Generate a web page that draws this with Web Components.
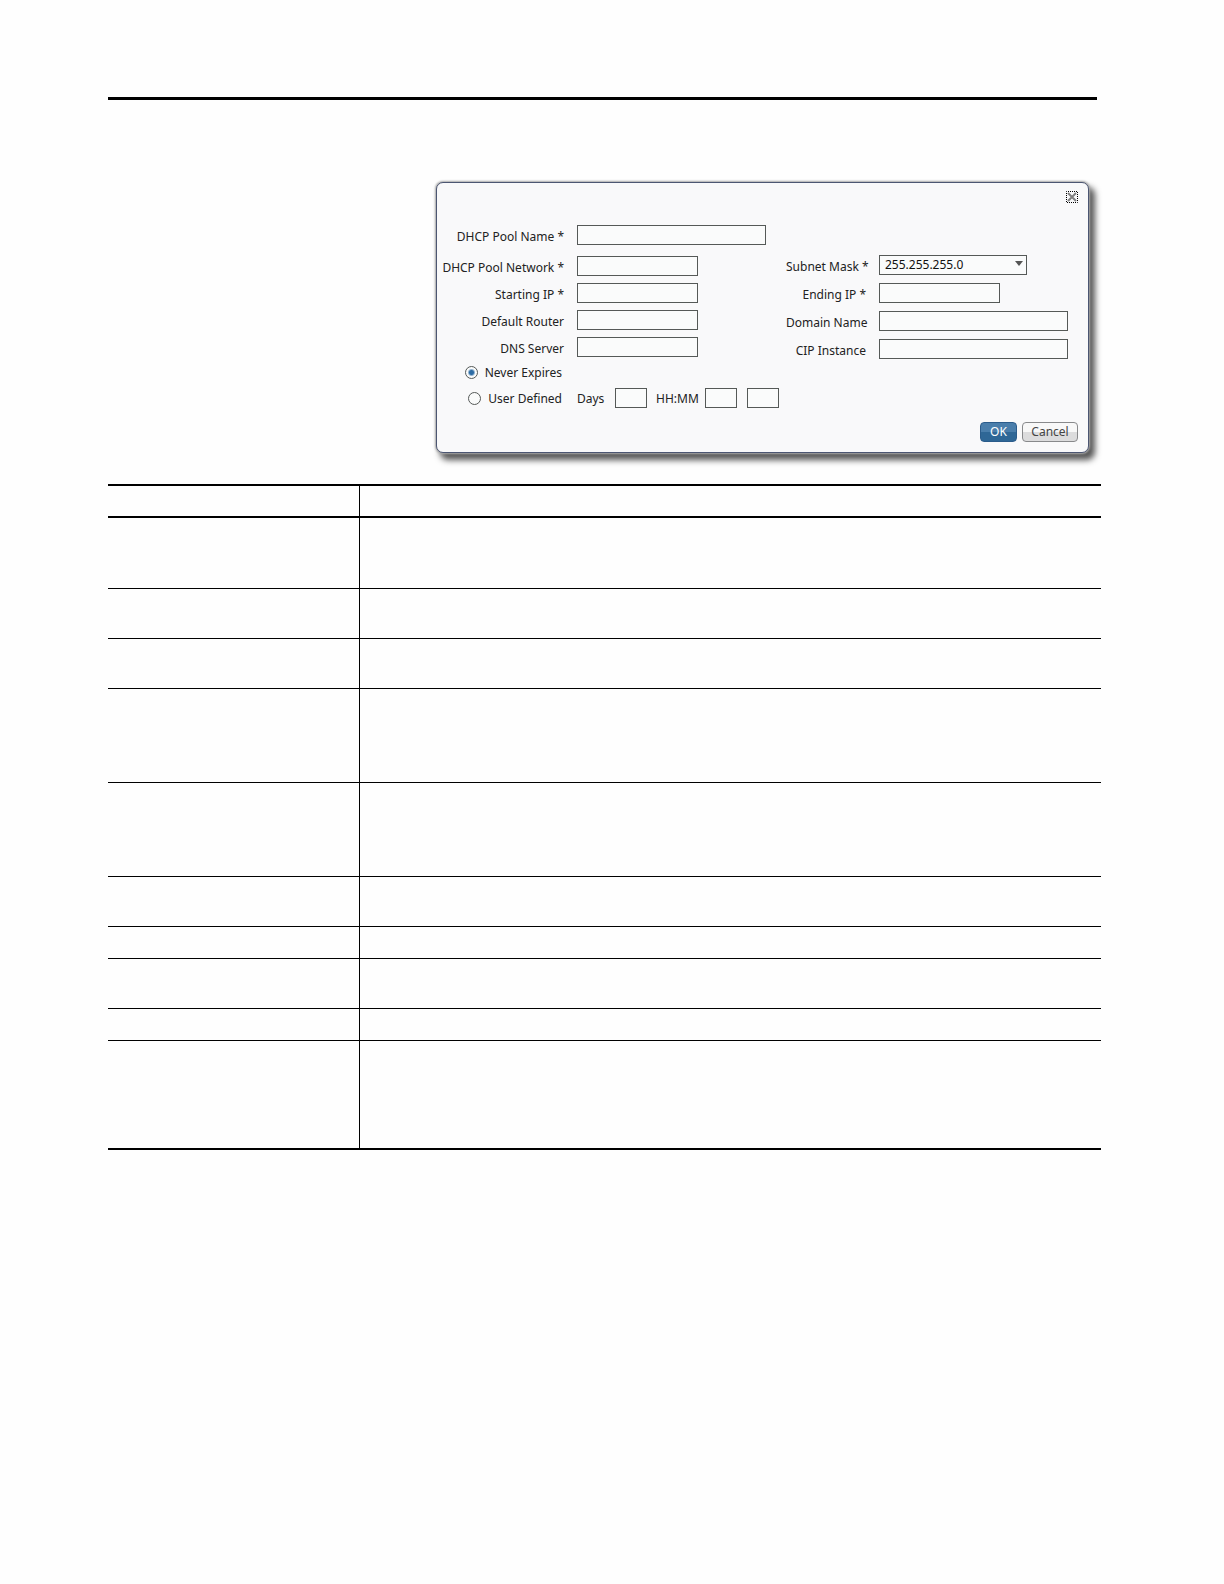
<!DOCTYPE html>
<html lang="en">
<head>
<meta charset="utf-8">
<title>DHCP Pool</title>
<style>
    body {
        margin: 0;
        background: #fefefe;
        font-family: "Noto Sans", "Open Sans", sans-serif;
        font-size: 12px;
        color: #222;
    }
</style>
</head>
<body>
<manual-page>
    <pool-dialog slot="figure"></pool-dialog>
    <settings-table rows="71 50 50 94 94 50 32 50 32 109"></settings-table>
</manual-page>

<script>
class ManualPage extends HTMLElement {
    constructor() {
        super();
        this.attachShadow({ mode: 'open' });

        this.shadowRoot.innerHTML = `
            <style>
                :host {
                    display: block;
                    padding: 97px 123px 97px 108px;
                }
                header {
                    border-top: 3px solid #000;
                    margin-right: 4px;
                }
                .figure {
                    margin: 82px 12px 31px 328px;
                }
            </style>
            <header></header>
            <div class="figure"><slot name="figure"></slot></div>
            <slot></slot>
        `;
    }
}

class FormField extends HTMLElement {
    constructor() {
        super();
        this.attachShadow({ mode: 'open' });
    }

    connectedCallback() {
        this.shadowRoot.innerHTML = `
            <style>
                :host {
                    display: grid;
                    grid-template-columns: var(--label-width, 120px) auto;
                    justify-content: start;
                    column-gap: 13px;
                    height: 20px;
                }
                label {
                    padding-top: 3px;
                    line-height: 17px;
                    text-align: right;
                    white-space: nowrap;
                }
                .box {
                    display: grid;
                    align-items: center;
                }
                input, select {
                    grid-area: 1 / 1;
                    box-sizing: border-box;
                    width: 121px;
                    height: 20px;
                    margin: 0;
                    padding: 0 5px;
                    border: 1px solid #555957;
                    border-radius: 0;
                    background: #fafbfb;
                    color: #111;
                    font: inherit;
                    line-height: 18px;
                }
                :host([size="medium"]) select {
                    appearance: none;
                    width: 148px;
                }
                :host([size="large"]) input {
                    width: 189px;
                }
                svg {
                    grid-area: 1 / 1;
                    justify-self: end;
                    margin: 0 4px 4px 0;
                    pointer-events: none;
                }
            </style>
            <label for="control">${this.getAttribute('label')}</label>
            <div class="box">${this.control()}</div>
        `;
    }

    control() {
        const value = this.getAttribute('value');
        if (!value) return '<input id="control" type="text">';
        return `
            <select id="control"><option>${value}</option></select>
            <svg width="8" height="5" viewBox="0 0 8 5"><path d="M0 0h8L4 5z" fill="#555"/></svg>
        `;
    }
}

class DialogButton extends HTMLElement {
    constructor() {
        super();
        this.attachShadow({ mode: 'open' });

        this.shadowRoot.innerHTML = `
            <style>
                :host {
                    display: block;
                }
                button {
                    display: block;
                    box-sizing: border-box;
                    width: 56px;
                    height: 20px;
                    padding: 0;
                    border: 1px solid #88898b;
                    border-radius: 4px;
                    background: linear-gradient(#f8f8f8 0 50%, #dcdcdd 50% 100%);
                    color: #444;
                    font: inherit;
                    line-height: 18px;
                }
                :host([primary]) button {
                    width: 37px;
                    border-color: #2b5c8b;
                    background: linear-gradient(#4a7eab 0 50%, #2f6796 50% 100%);
                    color: #fff;
                }
            </style>
            <button type="button"><slot></slot></button>
        `;
    }
}

class LeaseOptions extends HTMLElement {
    constructor() {
        super();
        this.attachShadow({ mode: 'open' });

        this.shadowRoot.innerHTML = `
            <style>
                :host {
                    display: grid;
                    row-gap: 6px;
                }
                .row {
                    display: flex;
                    align-items: center;
                    height: 20px;
                }
                .choice {
                    display: flex;
                    align-items: center;
                    justify-content: flex-end;
                    gap: 7px;
                    width: 120px;
                    margin-right: 15px;
                    white-space: nowrap;
                }
                input {
                    box-sizing: border-box;
                    margin: 0;
                    border: 1px solid #555957;
                    background: #fafbfb;
                    font: inherit;
                }
                input[type="radio"] {
                    appearance: none;
                    flex: none;
                    width: 13px;
                    height: 13px;
                    border-radius: 50%;
                }
                input[type="radio"]:checked {
                    background: radial-gradient(circle, #2d6ca5 0 2px, #fafbfb 4px);
                }
                input[type="text"] {
                    width: 32px;
                    height: 20px;
                    padding: 0 4px;
                }
                .days {
                    width: 38px;
                }
                .time {
                    width: 49px;
                    margin-left: 9px;
                }
                .minutes {
                    margin-left: 10px;
                }
            </style>
            <div class="row">
                <div class="choice">
                    <input type="radio" name="lease" id="never" checked>
                    <label for="never">Never Expires</label>
                </div>
            </div>
            <div class="row">
                <div class="choice">
                    <input type="radio" name="lease" id="custom">
                    <label for="custom">User Defined</label>
                </div>
                <label class="days" for="days">Days</label>
                <input type="text" id="days">
                <label class="time" for="hours">HH:MM</label>
                <input type="text" id="hours">
                <input type="text" class="minutes" aria-label="Minutes">
            </div>
        `;
    }
}

class PoolDialog extends HTMLElement {
    constructor() {
        super();
        this.attachShadow({ mode: 'open' });

        this.shadowRoot.innerHTML = `
            <style>
                :host {
                    display: block;
                    box-sizing: border-box;
                    padding: 8px 10px 10px 5px;
                    border: 1px solid #4c5672;
                    border-radius: 7px;
                    background: #f9f9fa;
                    box-shadow: 0 0 2px 1px #aaa, 5px 6px 6px 1px #555;
                }
                .close {
                    display: block;
                    width: 12px;
                    height: 12px;
                    margin-left: auto;
                    padding: 0;
                    border: 0;
                    background: none;
                }
                .close svg {
                    display: block;
                }
                .fields {
                    --label-width: 122px;
                    margin-top: 22px;
                }
                .columns {
                    display: flex;
                    justify-content: space-between;
                    margin: 10px 10px 3px 0;
                }
                .column {
                    display: grid;
                    align-content: start;
                    row-gap: 7px;
                    padding-top: 1px;
                }
                .column + .column {
                    --label-width: 80px;
                    row-gap: 8px;
                    padding-top: 0;
                }
                .actions {
                    display: flex;
                    justify-content: flex-end;
                    gap: 5px;
                    margin-top: 14px;
                }
            </style>
            <button class="close" type="button" aria-label="Close">
                <svg width="12" height="12" viewBox="0 0 12 12">
                    <path d="M2 2l8 8M10 2l-8 8" stroke="#808080" stroke-width="2"/>
                    <path d="M.5 .5h11v11H.5z" fill="none" stroke="#000" stroke-dasharray="1 1" stroke-dashoffset=".5"/>
                </svg>
            </button>
            <div class="fields">
                <form-field label="DHCP Pool Name *" size="large"></form-field>
                <div class="columns">
                    <div class="column">
                        <form-field label="DHCP Pool Network *"></form-field>
                        <form-field label="Starting IP *"></form-field>
                        <form-field label="Default Router"></form-field>
                        <form-field label="DNS Server"></form-field>
                    </div>
                    <div class="column">
                        <form-field label="Subnet Mask *" size="medium" value="255.255.255.0"></form-field>
                        <form-field label="Ending IP *"></form-field>
                        <form-field label="Domain Name" size="large"></form-field>
                        <form-field label="CIP Instance" size="large"></form-field>
                    </div>
                </div>
                <lease-options></lease-options>
            </div>
            <div class="actions">
                <dialog-button primary>OK</dialog-button>
                <dialog-button>Cancel</dialog-button>
            </div>
        `;
    }
}

class SettingsTable extends HTMLElement {
    constructor() {
        super();
        this.attachShadow({ mode: 'open' });
    }

    connectedCallback() {
        const rows = this.getAttribute('rows').split(' ')
            .map(height => `<tr style="height: ${height}px"><td></td><td></td></tr>`)
            .join('');

        this.shadowRoot.innerHTML = `
            <style>
                :host {
                    display: block;
                }
                table {
                    width: 100%;
                    table-layout: fixed;
                    border-spacing: 0;
                }
                th, td {
                    box-sizing: border-box;
                    padding: 0;
                    border-bottom: 1px solid #000;
                }
                th {
                    height: 34px;
                    border-top: 2px solid #000;
                    border-bottom-width: 2px;
                }
                th:first-child, td:first-child {
                    width: 252px;
                    border-right: 1px solid #000;
                }
                tr:last-child td {
                    border-bottom-width: 2px;
                }
            </style>
            <table>
                <thead><tr><th></th><th></th></tr></thead>
                <tbody>${rows}</tbody>
            </table>
        `;
    }
}

customElements.define('manual-page', ManualPage);
customElements.define('form-field', FormField);
customElements.define('dialog-button', DialogButton);
customElements.define('lease-options', LeaseOptions);
customElements.define('pool-dialog', PoolDialog);
customElements.define('settings-table', SettingsTable);
</script>
</body>
</html>
